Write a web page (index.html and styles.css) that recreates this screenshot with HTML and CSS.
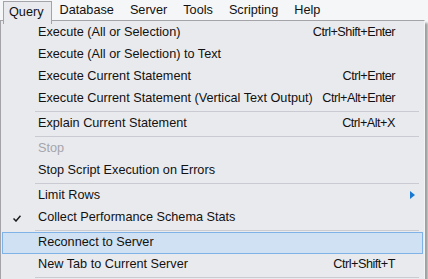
FILE: index.html
```html
<!DOCTYPE html>
<html lang="en">
<head>
    <meta charset="UTF-8">
    <title>Query menu</title>
    <link rel="stylesheet" href="styles.css">
</head>
<body>
    <div class="menubar">
        <span class="menubar-item active">Query</span>
        <span class="menubar-item">Database</span>
        <span class="menubar-item">Server</span>
        <span class="menubar-item">Tools</span>
        <span class="menubar-item">Scripting</span>
        <span class="menubar-item">Help</span>
    </div>

    <div class="dropdown">
        <div class="menu-item"><span class="label">Execute (All or Selection)</span><span class="shortcut">Ctrl+Shift+Enter</span></div>
        <div class="menu-item"><span class="label">Execute (All or Selection) to Text</span></div>
        <div class="menu-item"><span class="label">Execute Current Statement</span><span class="shortcut">Ctrl+Enter</span></div>
        <div class="menu-item"><span class="label">Execute Current Statement (Vertical Text Output)</span><span class="shortcut">Ctrl+Alt+Enter</span></div>
        <div class="separator"></div>
        <div class="menu-item"><span class="label">Explain Current Statement</span><span class="shortcut">Ctrl+Alt+X</span></div>
        <div class="separator"></div>
        <div class="menu-item disabled"><span class="label">Stop</span></div>
        <div class="menu-item"><span class="label">Stop Script Execution on Errors</span></div>
        <div class="separator"></div>
        <div class="menu-item"><span class="label">Limit Rows</span><span class="submenu-arrow"></span></div>
        <div class="menu-item">
            <svg class="check" width="8" height="7" viewBox="0 0 8 7"><path d="M0.5 3.5 L3 6 L7.5 0.8" fill="none" stroke="#1a1a1a" stroke-width="1.5"/></svg>
            <span class="label">Collect Performance Schema Stats</span>
        </div>
        <div class="separator"></div>
        <div class="menu-item hover"><span class="label">Reconnect to Server</span></div>
        <div class="menu-item"><span class="label">New Tab to Current Server</span><span class="shortcut">Ctrl+Shift+T</span></div>
        <div class="separator"></div>
    </div>
</body>
</html>
```

FILE: styles.css
```css
body {
    margin: 0;
    padding: 0;
    background-color: #f5f6f7;
    font-family: "Liberation Sans", Arial, sans-serif;
    font-size: 12.7px;
    color: #111;
    overflow: hidden;
}

.menubar {
    display: flex;
    height: 20px;
    padding-left: 3px;
    background-color: #f5f6f7;
}

.menubar-item {
    display: flex;
    align-items: center;
    padding: 0 8px 2px 8px;
    margin-top: 1px;
}

.menubar-item.active {
    position: relative;
    z-index: 1;
    height: 20px;
    padding: 0 7px 2px 5px;
    border: 1px solid #a3a3a8;
    border-bottom: none;
    background-color: #e9eaee;
}

.dropdown {
    width: 423px;
    padding-top: 1px;
    background-color: #e9eaee;
    border: 1px solid #a3a3a8;
    border-right-color: #f4f4f6;
    box-shadow: 3px 3px 2px rgba(0, 0, 0, 0.35);
}

.menu-item {
    display: flex;
    align-items: center;
    position: relative;
    height: 22px;
    margin: 0 1px;
    padding: 0 27px 3px 35px;
    border: 1px solid transparent;
    box-sizing: border-box;
}

.menu-item .label {
    flex: 1;
    white-space: nowrap;
}

.menu-item .shortcut {
    white-space: nowrap;
    letter-spacing: -0.5px;
}

.menu-item.disabled {
    color: #a5a5aa;
}

.menu-item.hover {
    background-color: #cfe1f3;
    border-color: #7fb3e8;
}

.separator {
    height: 1px;
    margin: 1px 5px 1px 34px;
    background-color: #c9cad2;
}

.check {
    position: absolute;
    left: 10px;
    top: 7px;
}

.submenu-arrow {
    width: 0;
    height: 0;
    margin-right: -20px;
    border-top: 4px solid transparent;
    border-bottom: 4px solid transparent;
    border-left: 5px solid #1979d2;
}
```
